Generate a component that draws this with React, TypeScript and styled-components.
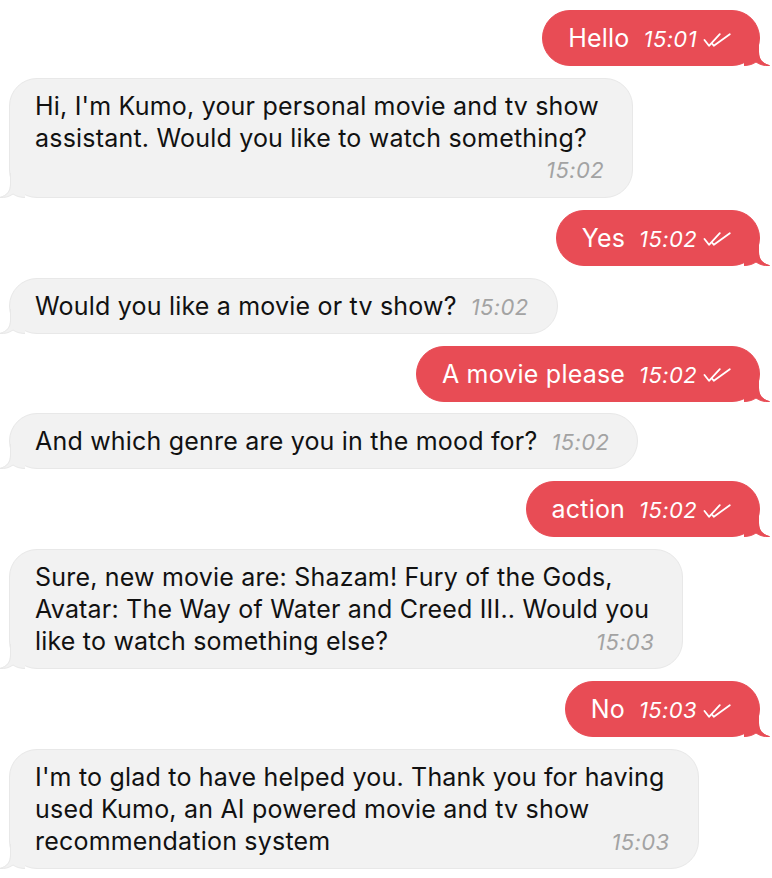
import React from "react";
import styled, { createGlobalStyle, css } from "styled-components";

const Global = createGlobalStyle`
  html, body { margin: 0; padding: 0; background: #ffffff; }
  body { font-family: Inter, "Noto Sans", "Liberation Sans", sans-serif; -webkit-font-smoothing: antialiased; }
`;

const RED = "#e84c55";
const GREY = "#f2f2f2";
const GREY_BORDER = "#e8e8e8";

const Thread = styled.div`
  display: flex;
  flex-direction: column;
  gap: 11.9px;
  padding: 10px 12px 8px 9px;
  width: 772px;
  box-sizing: border-box;
`;

const Row = styled.div<{ $mine: boolean }>`
  display: flex;
  justify-content: ${(p) => (p.$mine ? "flex-end" : "flex-start")};
`;

const Bubble = styled.div<{ $mine: boolean }>`
  position: relative;
  display: flex;
  flex-direction: column;
  box-sizing: border-box;
  padding: 11px 33px 11px 25px;
  border-radius: 28px;
  font-size: 25px;
  letter-spacing: 0.2px;
  line-height: 32px;
  white-space: nowrap;
  ${(p) =>
    p.$mine
      ? css`
          background: ${RED};
          border: 1px solid ${RED};
          color: #ffffff;
        `
      : css`
          background: ${GREY};
          border: 1px solid ${GREY_BORDER};
          color: #111111;
        `}
`;

const TextLine = styled.div`
  height: 32px;
`;

const Line = styled.div`
  display: flex;
  align-items: baseline;
  justify-content: space-between;
  gap: 14px;
  height: 32px;
`;

const Meta = styled.span<{ $mine: boolean; $below?: boolean }>`
  display: inline-flex;
  align-items: center;
  gap: 6px;
  margin-right: -5px;
  font-size: 22px;
  letter-spacing: 0.4px;
  line-height: 32px;
  height: 32px;
  font-style: italic;
  color: ${(p) => (p.$mine ? "#ffffff" : "#a3a3a3")};
  ${(p) =>
    p.$below &&
    css`
      align-self: flex-end;
    `}
`;

const TailSvg = styled.svg<{ $mine: boolean }>`
  position: absolute;
  bottom: -1px;
  width: 26px;
  height: 25px;
  overflow: visible;
  ${(p) =>
    p.$mine
      ? css`
          right: -11px;
        `
      : css`
          left: -11px;
          transform: scaleX(-1);
        `}
`;

function Tail({ mine }: { mine: boolean }) {
  const fill = mine ? RED : GREY;
  const stroke = mine ? RED : GREY_BORDER;
  return (
    <TailSvg $mine={mine} viewBox="0 0 26 25">
      <path
        d="M0,0 L15,0 L15,11 C15,18 18,22 25.5,24.5 C20,25 15.5,23.5 12,21 C8.5,23.5 4,24.5 0,24.5 Z"
        fill={fill}
      />
      <path
        d="M14.5,0 L14.5,11 C14.5,18 17.5,22.5 25.5,24.5 C20,25 15.5,23.5 12,21 C8.5,23.5 4,24.5 0,24.5"
        fill="none"
        stroke={stroke}
        strokeWidth="1"
      />
    </TailSvg>
  );
}

const Checks = styled.svg`
  width: 28px;
  height: 14px;
  flex: none;
  margin-top: 1px;
`;

function DoubleCheck() {
  return (
    <Checks viewBox="0 0 28 14">
      <path
        d="M1.5 7 L6 12.8 L16.8 1.2 M9.6 11.2 L10.8 12.8 L26.8 1.2"
        fill="none"
        stroke="#ffffff"
        strokeWidth="1.8"
        strokeLinecap="round"
        strokeLinejoin="round"
      />
    </Checks>
  );
}

type Msg = {
  mine: boolean;
  lines: string[];
  time: string;
  timeBelow?: boolean;
};

const messages: Msg[] = [
  { mine: true, lines: ["Hello"], time: "15:01" },
  {
    mine: false,
    lines: [
      "Hi, I'm Kumo, your personal movie and tv show",
      "assistant. Would you like to watch something?",
    ],
    time: "15:02",
    timeBelow: true,
  },
  { mine: true, lines: ["Yes"], time: "15:02" },
  { mine: false, lines: ["Would you like a movie or tv show?"], time: "15:02" },
  { mine: true, lines: ["A movie please"], time: "15:02" },
  { mine: false, lines: ["And which genre are you in the mood for?"], time: "15:02" },
  { mine: true, lines: ["action"], time: "15:02" },
  {
    mine: false,
    lines: [
      "Sure, new movie are: Shazam! Fury of the Gods,",
      "Avatar: The Way of Water and Creed III.. Would you",
      "like to watch something else?",
    ],
    time: "15:03",
  },
  { mine: true, lines: ["No"], time: "15:03" },
  {
    mine: false,
    lines: [
      "I'm to glad to have helped you. Thank you for having",
      "used Kumo, an AI powered movie and tv show",
      "recommendation system",
    ],
    time: "15:03",
  },
];

function Message({ m }: { m: Msg }) {
  const meta = (
    <Meta $mine={m.mine} $below={m.timeBelow}>
      {m.time}
      {m.mine && <DoubleCheck />}
    </Meta>
  );
  const head = m.lines.slice(0, -1);
  const last = m.lines[m.lines.length - 1];
  return (
    <Row $mine={m.mine}>
      <Bubble $mine={m.mine}>
        {head.map((l, i) => (
          <TextLine key={i}>{l}</TextLine>
        ))}
        {m.timeBelow ? (
          <>
            <TextLine>{last}</TextLine>
            {meta}
          </>
        ) : (
          <Line>
            <span>{last}</span>
            {meta}
          </Line>
        )}
        <Tail mine={m.mine} />
      </Bubble>
    </Row>
  );
}

export default function App() {
  return (
    <>
      <Global />
      <Thread>
        {messages.map((m, i) => (
          <Message key={i} m={m} />
        ))}
      </Thread>
    </>
  );
}
